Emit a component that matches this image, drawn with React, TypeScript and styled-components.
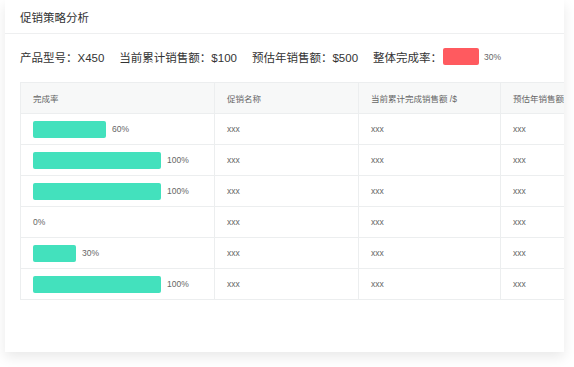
import React from 'react';
import styled, { createGlobalStyle } from 'styled-components';

const GlobalStyle = createGlobalStyle`
  html, body {
    margin: 0;
    padding: 0;
    background: #fff;
  }
  body {
    font-family: "Liberation Sans", "Noto Sans CJK SC", sans-serif;
    color: #333;
  }
`;

const Page = styled.main`
  padding: 0 10px 15px 5px;
`;

const Card = styled.section`
  width: 559px;
  height: 352px;
  background: #fff;
  box-shadow: 0 5px 12px rgba(0, 0, 0, 0.09);
  overflow: hidden;
`;

const CardHeader = styled.header`
  height: 33px;
  display: flex;
  align-items: center;
  padding: 0 15px;
  border-bottom: 1px solid #eeeff0;
  font-size: 11.5px;
  color: #333;
`;

const InfoRow = styled.div`
  display: flex;
  align-items: center;
  gap: 15px;
  height: 17px;
  padding: 14px 15px 0;
  margin-bottom: 17px;
  font-size: 11.5px;
  white-space: nowrap;
`;

const InfoItem = styled.span`
  display: flex;
  align-items: center;
`;

const RateBlock = styled.span`
  display: inline-block;
  width: 36px;
  height: 17px;
  border-radius: 2px;
  background: #ff5a5f;
  margin-left: 1px;
`;

const SmallText = styled.span`
  font-size: 8.5px;
  color: #666;
  margin-left: 5px;
`;

const TableWrap = styled.div`
  padding-left: 15px;
`;

const Table = styled.table`
  border-collapse: collapse;
  table-layout: fixed;
  width: 620px;
  font-size: 8.5px;
  color: #666;
`;

const HeadCell = styled.th<{ $w: number }>`
  width: ${(p) => p.$w - 12}px;
  height: 30px;
  padding: 0 0 0 12px;
  text-align: left;
  font-weight: normal;
  background: #f7f8f8;
  border: 1px solid #eceeef;
  white-space: nowrap;
  overflow: hidden;
`;

const Cell = styled.td`
  height: 30px;
  padding: 0 0 0 12px;
  border: 1px solid #eceeef;
  white-space: nowrap;
`;

const Progress = styled.div`
  display: flex;
  align-items: center;
  gap: 6px;
`;

const Bar = styled.div<{ $w: number }>`
  width: ${(p) => p.$w}px;
  height: 17px;
  border-radius: 2px;
  background: #43e1bd;
`;

const rows = [60, 100, 100, 0, 30, 100];

const barWidth = (pct: number) => {
  if (pct === 100) return 128;
  if (pct === 60) return 73;
  return Math.round(pct * 1.43);
};

const App = () => {
  return (
    <>
      <GlobalStyle />
      <Page>
        <Card>
          <CardHeader>促销策略分析</CardHeader>
          <InfoRow>
            <InfoItem>产品型号：X450</InfoItem>
            <InfoItem>当前累计销售额：$100</InfoItem>
            <InfoItem>预估年销售额：$500</InfoItem>
            <InfoItem>
              整体完成率：
              <RateBlock />
              <SmallText>30%</SmallText>
            </InfoItem>
          </InfoRow>
          <TableWrap>
            <Table>
              <thead>
                <tr>
                  <HeadCell $w={193}>完成率</HeadCell>
                  <HeadCell $w={143}>促销名称</HeadCell>
                  <HeadCell $w={141}>当前累计完成销售额 /$</HeadCell>
                  <HeadCell $w={143}>预估年销售额 /$</HeadCell>
                </tr>
              </thead>
              <tbody>
                {rows.map((pct, i) => (
                  <tr key={i}>
                    <Cell>
                      <Progress>
                        {pct > 0 && <Bar $w={barWidth(pct)} />}
                        <span>{pct}%</span>
                      </Progress>
                    </Cell>
                    <Cell>xxx</Cell>
                    <Cell>xxx</Cell>
                    <Cell>xxx</Cell>
                  </tr>
                ))}
              </tbody>
            </Table>
          </TableWrap>
        </Card>
      </Page>
    </>
  );
};

App.displayName = 'App';
export default App;
